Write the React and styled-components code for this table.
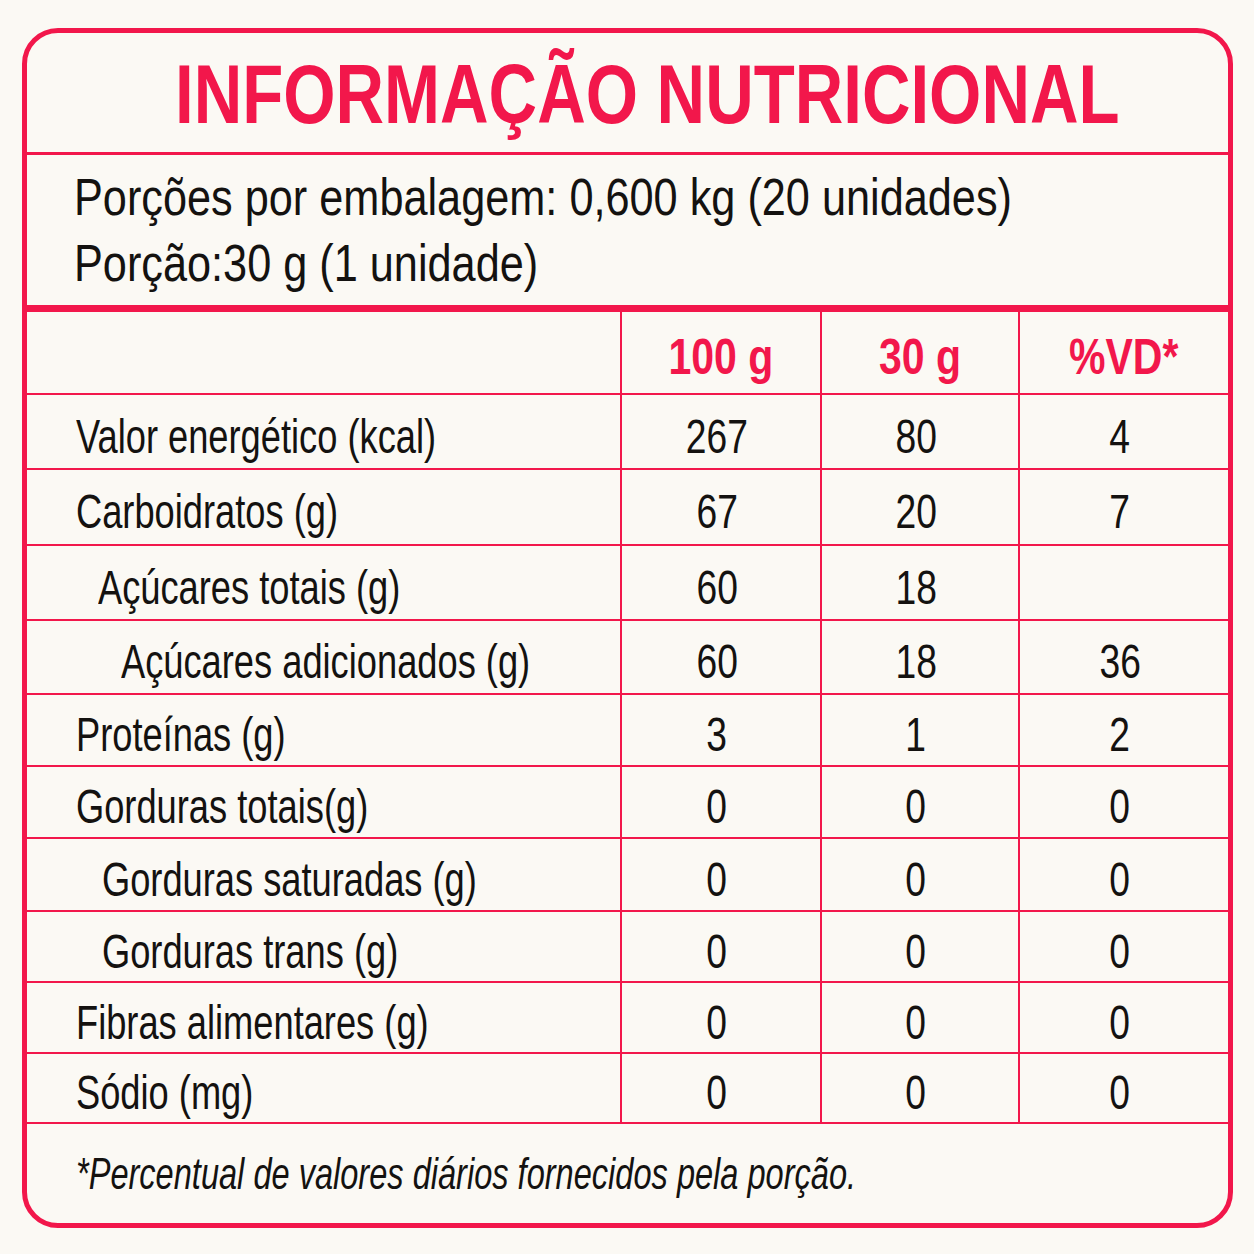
import styled, { createGlobalStyle } from "styled-components";

const RED = "#f2174b";
const INK = "#141210";

const Global = createGlobalStyle`
    html, body {
        margin: 0;
        padding: 0;
        background: #fbf9f4;
    }
    body {
        font-family: "Liberation Sans", Arial, sans-serif;
        color: ${INK};
    }
`;

const Page = styled.div`
    padding: 28px 0 0 22px;
`;

const Card = styled.div`
    width: 1211px;
    height: 1200px;
    box-sizing: border-box;
    border: 5px solid ${RED};
    border-radius: 36px;
    overflow: hidden;
    display: flex;
    flex-direction: column;
`;

// condensed look: Liberation Sans squeezed horizontally
const Squeeze = styled.span`
    display: inline-block;
    white-space: nowrap;
    transform: scaleX(${p => p.$x});
    transform-origin: ${p => p.$origin || "center"};
`;

const Title = styled.h1`
    margin: 0;
    height: 122px;
    box-sizing: border-box;
    border-bottom: 3px solid ${RED};
    display: flex;
    align-items: center;
    justify-content: center;
    padding: 4px 0 0 40px;
    font-size: 84px;
    font-weight: bold;
    color: ${RED};
`;

const Serving = styled.div`
    height: 157px;
    box-sizing: border-box;
    border-bottom: 7px solid ${RED};
    padding: 9px 0 0 47px;
    font-size: 52px;
    line-height: 66px;
`;

const Line = styled.div`
    white-space: nowrap;
`;

const Grid = styled.div`
    display: grid;
    grid-template-columns: 593px 200px 198px 1fr;
    grid-template-rows: 83px 75px 76px 75px 74px 72px 72px 73px 71px 71px 70px;
`;

const Cell = styled.div`
    box-sizing: border-box;
    border-bottom: 2px solid ${RED};
    border-left: ${p => (p.$first ? "none" : `2px solid ${RED}`)};
    display: flex;
    align-items: center;
`;

const HeadCell = styled(Cell)`
    justify-content: center;
    padding-top: 8px;
    font-size: 50px;
    font-weight: bold;
    color: ${RED};
`;

const LabelCell = styled(Cell)`
    padding: 8px 0 0 ${p => 49 + p.$indent}px;
    font-size: 49px;
`;

const ValueCell = styled(Cell)`
    justify-content: center;
    padding: 8px 8px 0 0;
    font-size: 49px;
`;

const Footnote = styled.div`
    flex: 1;
    display: flex;
    align-items: center;
    padding: 0 0 0 49px;
    font-size: 44px;
    font-style: italic;
`;

const rows = [
    ["Valor energético (kcal)", 0, "267", "80", "4"],
    ["Carboidratos (g)", 0, "67", "20", "7"],
    ["Açúcares totais (g)", 22, "60", "18", ""],
    ["Açúcares adicionados (g)", 45, "60", "18", "36"],
    ["Proteínas (g)", 0, "3", "1", "2"],
    ["Gorduras totais(g)", 0, "0", "0", "0"],
    ["Gorduras saturadas (g)", 26, "0", "0", "0"],
    ["Gorduras trans (g)", 26, "0", "0", "0"],
    ["Fibras alimentares (g)", 0, "0", "0", "0"],
    ["Sódio (mg)", 0, "0", "0", "0"],
];

export default function App() {
    return (
        <Page>
            <Global />
            <Card>
                <Title><Squeeze $x={0.8}>INFORMAÇÃO NUTRICIONAL</Squeeze></Title>
                <Serving>
                    <Line><Squeeze $x={0.832} $origin="left">Porções por embalagem: 0,600 kg (20 unidades)</Squeeze></Line>
                    <Line><Squeeze $x={0.832} $origin="left">Porção:30 g (1 unidade)</Squeeze></Line>
                </Serving>
                <Grid>
                    <HeadCell $first />
                    <HeadCell><Squeeze $x={0.82}>100 g</Squeeze></HeadCell>
                    <HeadCell><Squeeze $x={0.82}>30 g</Squeeze></HeadCell>
                    <HeadCell><Squeeze $x={0.82}>%VD*</Squeeze></HeadCell>
                    {rows.map(([label, indent, a, b, c]) => [
                        <LabelCell key={label} $first $indent={indent}>
                            <Squeeze $x={0.74} $origin="left">{label}</Squeeze>
                        </LabelCell>,
                        <ValueCell key={label + "a"}><Squeeze $x={0.76}>{a}</Squeeze></ValueCell>,
                        <ValueCell key={label + "b"}><Squeeze $x={0.76}>{b}</Squeeze></ValueCell>,
                        <ValueCell key={label + "c"}><Squeeze $x={0.76}>{c}</Squeeze></ValueCell>,
                    ])}
                </Grid>
                <Footnote>
                    <Squeeze $x={0.74} $origin="left">*Percentual de valores diários fornecidos pela porção.</Squeeze>
                </Footnote>
            </Card>
        </Page>
    );
}
